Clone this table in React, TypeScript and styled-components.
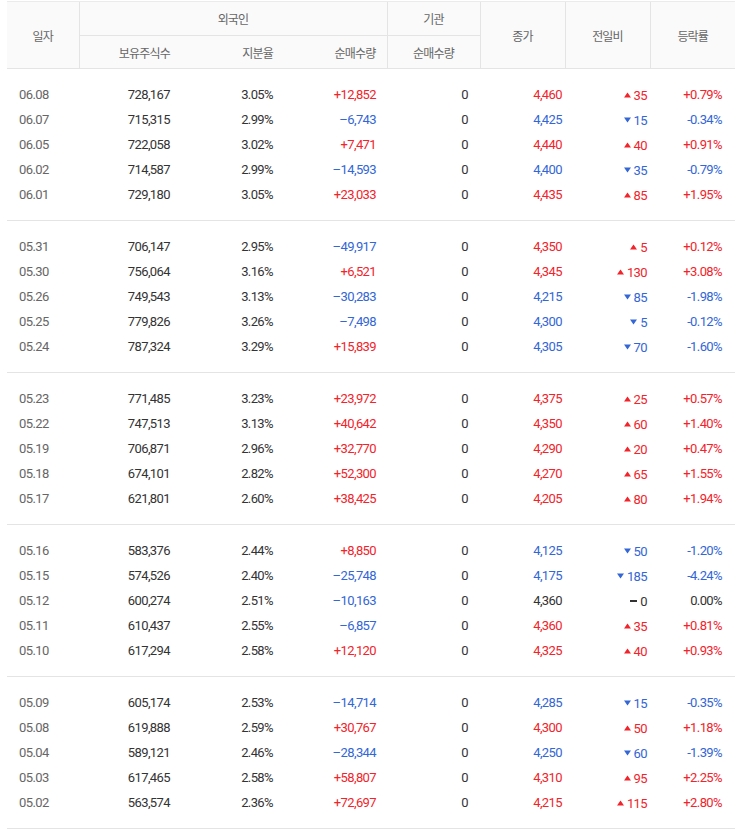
import React from "react";
import styled, { createGlobalStyle } from "styled-components";

const GlobalStyle = createGlobalStyle`
  html, body { margin: 0; padding: 0; background: #fff; }
  body { font-family: Roboto, "Noto Sans CJK KR", sans-serif; }
`;

const UP = "#f2232a";
const DOWN = "#3366d6";
const EVEN = "#333";

type Dir = "up" | "down" | "flat";
type Row = [string, string, string, string, string, Dir, string, string];

const groups: Row[][] = [
  [
    ["06.08", "728,167", "3.05%", "+12,852", "4,460", "up", "35", "+0.79%"],
    ["06.07", "715,315", "2.99%", "–6,743", "4,425", "down", "15", "-0.34%"],
    ["06.05", "722,058", "3.02%", "+7,471", "4,440", "up", "40", "+0.91%"],
    ["06.02", "714,587", "2.99%", "–14,593", "4,400", "down", "35", "-0.79%"],
    ["06.01", "729,180", "3.05%", "+23,033", "4,435", "up", "85", "+1.95%"],
  ],
  [
    ["05.31", "706,147", "2.95%", "–49,917", "4,350", "up", "5", "+0.12%"],
    ["05.30", "756,064", "3.16%", "+6,521", "4,345", "up", "130", "+3.08%"],
    ["05.26", "749,543", "3.13%", "–30,283", "4,215", "down", "85", "-1.98%"],
    ["05.25", "779,826", "3.26%", "–7,498", "4,300", "down", "5", "-0.12%"],
    ["05.24", "787,324", "3.29%", "+15,839", "4,305", "down", "70", "-1.60%"],
  ],
  [
    ["05.23", "771,485", "3.23%", "+23,972", "4,375", "up", "25", "+0.57%"],
    ["05.22", "747,513", "3.13%", "+40,642", "4,350", "up", "60", "+1.40%"],
    ["05.19", "706,871", "2.96%", "+32,770", "4,290", "up", "20", "+0.47%"],
    ["05.18", "674,101", "2.82%", "+52,300", "4,270", "up", "65", "+1.55%"],
    ["05.17", "621,801", "2.60%", "+38,425", "4,205", "up", "80", "+1.94%"],
  ],
  [
    ["05.16", "583,376", "2.44%", "+8,850", "4,125", "down", "50", "-1.20%"],
    ["05.15", "574,526", "2.40%", "–25,748", "4,175", "down", "185", "-4.24%"],
    ["05.12", "600,274", "2.51%", "–10,163", "4,360", "flat", "0", "0.00%"],
    ["05.11", "610,437", "2.55%", "–6,857", "4,360", "up", "35", "+0.81%"],
    ["05.10", "617,294", "2.58%", "+12,120", "4,325", "up", "40", "+0.93%"],
  ],
  [
    ["05.09", "605,174", "2.53%", "–14,714", "4,285", "down", "15", "-0.35%"],
    ["05.08", "619,888", "2.59%", "+30,767", "4,300", "up", "50", "+1.18%"],
    ["05.04", "589,121", "2.46%", "–28,344", "4,250", "down", "60", "-1.39%"],
    ["05.03", "617,465", "2.58%", "+58,807", "4,310", "up", "95", "+2.25%"],
    ["05.02", "563,574", "2.36%", "+72,697", "4,215", "up", "115", "+2.80%"],
  ],
];

const Wrap = styled.div`
  padding: 1px 2px 0 7px;
`;

const Table = styled.table`
  width: 728px;
  table-layout: fixed;
  border-collapse: collapse;
  border-spacing: 0;
`;

const HeadRow = styled.tr<{ $h: number }>`
  height: ${(p) => p.$h}px;
`;

const Th = styled.th<{ $align?: string; $pr?: number; $left?: boolean }>`
  background: #fafafa;
  color: #666;
  font-family: "Noto Sans CJK KR", "Noto Sans", sans-serif;
  font-size: 12px;
  font-weight: 400;
  letter-spacing: -0.8px;
  padding: 0 ${(p) => p.$pr ?? 0}px 0 0;
  text-align: ${(p) => p.$align ?? "center"};
  vertical-align: middle;
  border-top: 1px solid #ebebeb;
  border-bottom: 1px solid #e4e4e4;
  border-left: ${(p) => (p.$left ? "1px solid #e4e4e4" : "none")};
`;

const Group = styled.tbody`
  border-bottom: 1px solid #e4e4e4;
  & > tr:first-child > td { padding-top: 13px; }
  & > tr:last-child > td { padding-bottom: 13px; }
`;

const BodyRow = styled.tr`
  height: 25px;
`;

const Td = styled.td<{ $align?: string; $pl?: number; $pr?: number; $color?: string }>`
  height: 25px;
  box-sizing: content-box;
  padding: 0 ${(p) => p.$pr ?? 0}px 0 ${(p) => p.$pl ?? 0}px;
  text-align: ${(p) => p.$align ?? "right"};
  vertical-align: middle;
  font-size: 13px;
  letter-spacing: -0.6px;
  color: ${(p) => p.$color ?? "#333"};
  white-space: nowrap;
`;

const Change = styled.span`
  display: inline-flex;
  align-items: center;
  gap: 3px;
  & > svg { margin-top: -1px; }
`;

const Mark = ({ dir }: { dir: Dir }) => {
  if (dir === "up")
    return (
      <svg width="7" height="6" viewBox="0 0 7 6">
        <polygon points="3.5,0.5 7,5.5 0,5.5" fill={UP} />
      </svg>
    );
  if (dir === "down")
    return (
      <svg width="7" height="6" viewBox="0 0 7 6">
        <polygon points="0,0.5 7,0.5 3.5,5.5" fill={DOWN} />
      </svg>
    );
  return (
    <svg width="7" height="6" viewBox="0 0 7 6">
      <rect x="0" y="2" width="7" height="2" fill="#333" />
    </svg>
  );
};

const dirColor = (d: Dir) => (d === "up" ? UP : d === "down" ? DOWN : EVEN);

export default function App() {
  return (
    <>
      <GlobalStyle />
      <Wrap>
        <Table>
          <colgroup>
            <col style={{ width: 72 }} />
            <col style={{ width: 102 }} />
            <col style={{ width: 103 }} />
            <col style={{ width: 103 }} />
            <col style={{ width: 93 }} />
            <col style={{ width: 85 }} />
            <col style={{ width: 85 }} />
            <col style={{ width: 85 }} />
          </colgroup>
          <thead>
            <HeadRow $h={34}>
              <Th rowSpan={2}>일자</Th>
              <Th colSpan={3} $left>외국인</Th>
              <Th $left>기관</Th>
              <Th rowSpan={2} $left>종가</Th>
              <Th rowSpan={2} $left>전일비</Th>
              <Th rowSpan={2} $left>등락률</Th>
            </HeadRow>
            <HeadRow $h={33}>
              <Th $left $align="right" $pr={11}>보유주식수</Th>
              <Th $align="right" $pr={11}>지분율</Th>
              <Th $align="right" $pr={11}>순매수량</Th>
              <Th $left>순매수량</Th>
            </HeadRow>
          </thead>
          {groups.map((g, gi) => (
            <Group key={gi}>
              {g.map((r) => {
                const [date, hold, ratio, net, close, dir, diff, rate] = r;
                const netColor = net.startsWith("+") ? UP : DOWN;
                const c = dirColor(dir);
                return (
                  <BodyRow key={date}>
                    <Td $align="left" $pl={12} $color="#666">{date}</Td>
                    <Td $pr={11}>{hold}</Td>
                    <Td $pr={11}>{ratio}</Td>
                    <Td $pr={11} $color={netColor}>{net}</Td>
                    <Td $pr={12}>0</Td>
                    <Td $pr={3} $color={c}>{close}</Td>
                    <Td $pr={3} $color={c}>
                      <Change>
                        <Mark dir={dir} />
                        {diff}
                      </Change>
                    </Td>
                    <Td $pr={13} $color={c}>{rate}</Td>
                  </BodyRow>
                );
              })}
            </Group>
          ))}
        </Table>
      </Wrap>
    </>
  );
}
